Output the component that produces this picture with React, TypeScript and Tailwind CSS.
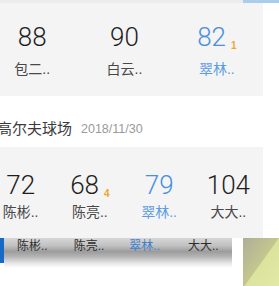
type Score = { score: string; name: string; badge?: string; highlight?: boolean }

const firstRound: Score[] = [
  { score: '88', name: '包二..' },
  { score: '90', name: '白云..' },
  { score: '82', name: '翠林..', badge: '1', highlight: true },
]

const secondRound: Score[] = [
  { score: '72', name: '陈彬..' },
  { score: '68', name: '陈亮..', badge: '4' },
  { score: '79', name: '翠林..', highlight: true },
  { score: '104', name: '大大..' },
]

const font = { fontFamily: '"Liberation Sans", "Noto Sans CJK SC", sans-serif' }

function ScoreCell({ item, gap }: { item: Score; gap: string }) {
  return (
    <div className="flex flex-col items-center">
      <div className="flex items-end">
        <span
          className={`font-[Roboto,'Liberation_Sans',sans-serif] text-[26px] leading-[26px] font-light ${item.highlight ? 'text-[#4a90df]' : 'text-[#1e1e1e]'}`}
        >
          {item.score}
        </span>
        {item.badge && (
          <span className="ml-[5px] mb-[-2px] text-[10px] leading-[12px] font-bold text-[#f0a630]">
            {item.badge}
          </span>
        )}
      </div>
      <span
        className={`${gap} text-[14px] leading-[16px] ${item.highlight ? 'text-[#5c9ce2]' : 'text-[#484848]'}`}
      >
        {item.name}
      </span>
    </div>
  )
}

export default function App() {
  return (
    <div className="relative h-[286px] w-[279px] overflow-hidden bg-white" style={font}>
      <div className="flex h-[3px]">
        <div className="flex-1 bg-[#ececec]" />
        <div className="w-[36px] bg-[#aacdee]" />
      </div>

      <div className="ml-[-14px] w-[277px] bg-[#f4f4f4] pt-[21px] pb-[19px]">
        <div className="grid grid-cols-3">
          {firstRound.map((item) => (
            <ScoreCell gap="mt-[11px]" item={item} key={item.name} />
          ))}
        </div>
      </div>

      <div className="flex items-center gap-[9px] pt-[24px] pb-[9px]">
        <span className="ml-[-3px] text-[15px] leading-[18px] text-[#3c3c3c]">高尔夫球场</span>
        <span className="text-[12.5px] leading-[16px] text-[#9a9a9a]">2018/11/30</span>
      </div>

      <div className="ml-[-14px] w-[277px] bg-[#f4f4f4] pt-[25px] pb-[18px]">
        <div className="grid grid-cols-4">
          {secondRound.map((item) => (
            <ScoreCell gap="mt-[6px]" item={item} key={item.name} />
          ))}
        </div>
      </div>

      <div className="flex h-[50px]">
        <div className="h-[25px] w-[4px] bg-[#1769c8]" />
        <div className="h-[30px] w-[228px] bg-[linear-gradient(to_bottom,#d6d6d6_0%,#c2c2c2_25%,#9c9c9c_45%,#b4b4b4_62%,#e8e8e8_85%,#ffffff_100%)]">
          <div className="flex pt-[1px] text-[12px] leading-[14px] text-[#2e2e2e]">
            <span className="ml-[13px]">陈彬..</span>
            <span className="ml-[26px]">陈亮..</span>
            <span className="ml-[25px] text-[#3f7fd0]">翠林..</span>
            <span className="ml-[28px]">大大..</span>
          </div>
        </div>
        <div className="ml-auto w-[36px] bg-[linear-gradient(to_bottom_right,#aeae98_0%,#c4c68f_49%,#dce39d_51%,#e3e9a6_100%)]" />
      </div>
    </div>
  )
}
